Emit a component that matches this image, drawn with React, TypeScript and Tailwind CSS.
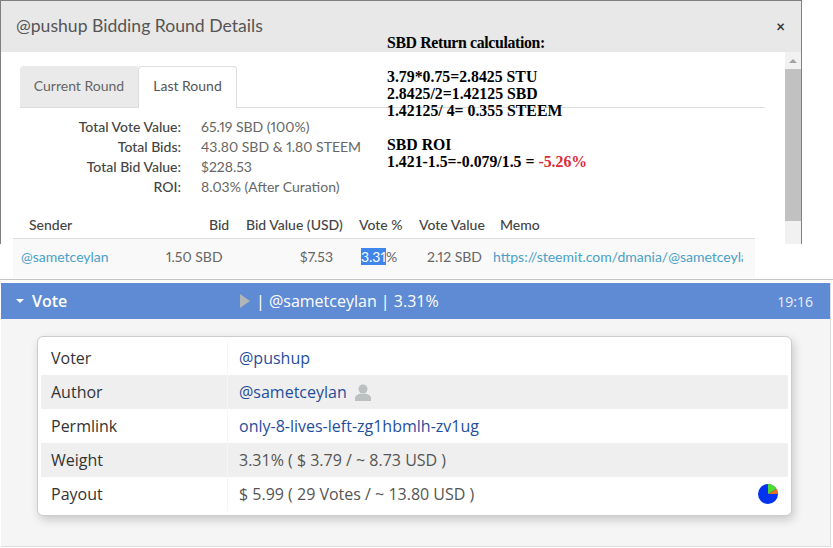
const stats = [
  { label: 'Total Vote Value:', value: '65.19 SBD (100%)' },
  { label: 'Total Bids:', value: '43.80 SBD & 1.80 STEEM' },
  { label: 'Total Bid Value:', value: '$228.53' },
  { label: 'ROI:', value: '8.03% (After Curation)' },
]

const UserIcon = () => (
  <svg width="18" height="17" viewBox="0 0 18 17" className="ml-[7px]">
    <circle cx="9" cy="5" r="4.5" fill="#bcc0c0" />
    <path d="M1 17v-3c0-2.5 3-3.8 5-4.300h6c2 .5 5 1.800 5 4.300v3z" fill="#bcc0c0" />
  </svg>
)

const PayoutPie = () => (
  <svg width="20" height="20" viewBox="0 0 20 20">
    <circle cx="10" cy="10" r="10" fill="#0433f0" />
    <path d="M10 10V0a10 10 0 0 1 8.500 4.700z" fill="#4ddc32" />
    <path d="M10 10l8.500-5.300A10 10 0 0 1 20 10z" fill="#dc7426" />
  </svg>
)

const Row = ({ label, alt, children }: { label: string; alt?: boolean; children: React.ReactNode }) => (
  <div className={`flex h-[34px] items-center ${alt ? 'bg-[#efefef]' : 'bg-white'}`}>
    <div className="w-[187px] shrink-0 border-r border-[#f6f6f6] pl-[10px] self-stretch flex items-center text-[#333]">{label}</div>
    <div className="flex flex-1 items-center pl-[11px] pr-[10px] text-[#555]">{children}</div>
  </div>
)

export default function App() {
  return (
    <div className="h-[548px] w-[833px] overflow-hidden bg-white font-['Open_Sans',sans-serif]">
      {/* bidding modal */}
      <div className="relative h-[280px] border-b border-[#c4c4c4] font-['Lato',sans-serif] proportional-nums">
        <div className="flex h-[244px] w-[802px] flex-col border-x border-t border-[#808080]">
          <div className="flex h-[51px] shrink-0 items-center justify-between bg-[#e8e8e8] pl-[15px] pr-[16px]">
            <span className="text-[17.6px] text-[#555]">@pushup Bidding Round Details</span>
            <span className="text-[15px] font-bold leading-none text-[#333]">×</span>
          </div>
          <div className="flex min-h-0 flex-1">
            <div className="flex-1 text-[14px] text-[#666]">
              <div className="ml-[19px] mr-[20px] mt-[14px] flex h-[42px] border-b border-[#ddd]">
                <div className="flex h-[41px] w-[118px] items-center justify-center rounded-tl-[4px] bg-[#eaeaea] pb-[2px] text-[#666]">Current Round</div>
                <div className="flex h-[42px] w-[99px] items-center justify-center rounded-t-[4px] border-x border-t border-[#ddd] bg-white pb-[4px] text-[#555]">Last Round</div>
              </div>
              <div className="mt-[8px]">
                {stats.map((s) => (
                  <div key={s.label} className="flex h-[20px] items-center">
                    <div className="w-[180px] text-right font-medium text-[#444]">{s.label}</div>
                    <div className="ml-[20px]">{s.value}</div>
                  </div>
                ))}
              </div>
              <div className="relative z-10 ml-[12px] mt-[16px] w-[742px]">
                <div className="flex h-[27px] items-center border-b border-[#ddd] pb-[2px] font-medium text-[#444]">
                  <div className="ml-[16px] w-[180px]">Sender</div>
                  <div className="w-[37px]">Bid</div>
                  <div className="w-[113px]">Bid Value (USD)</div>
                  <div className="w-[60px]">Vote %</div>
                  <div className="w-[81px]">Vote Value</div>
                  <div>Memo</div>
                </div>
                <div className="flex h-[39px] items-center whitespace-nowrap bg-[#f9f9f9] pb-[4px]">
                  <div className="ml-[8px] w-[145px] text-[#4aa0c8]">@sametceylan</div>
                  <div className="w-[54px]">1.50 SBD</div>
                  <div className="w-[113px] text-right">$7.53</div>
                  <div className="ml-[28px] w-[66px]"><span className="bg-[#3f86ec] text-white">3.31</span>%</div>
                  <div className="w-[66px]">2.12 SBD</div>
                  <div className="w-[250px] overflow-hidden text-[#4aa0c8]">https://steemit.com/dmania/@sametceylan/only-8-lives-left</div>
                </div>
              </div>
            </div>
            <div className="flex w-[16px] shrink-0 flex-col bg-[#f1f1f1]">
              <div className="flex h-[17px] items-center justify-center">
                <div className="h-0 w-0 border-x-[4px] border-b-[4px] border-x-transparent border-b-[#a3a3a3]"></div>
              </div>
              <div className="h-[152px] bg-[#c1c1c1]"></div>
            </div>
          </div>
        </div>

        {/* pasted calculation note */}
        <div className="absolute left-[387px] top-[34px] z-20 font-['Liberation_Serif',serif] text-[15.8px] font-bold leading-[17px] text-black">
          <div className="tracking-[-0.35px]">SBD Return calculation:</div>
          <div className="h-[17px]"></div>
          <div>3.79*0.75=2.8425 STU</div>
          <div>2.8425/2=1.42125 SBD</div>
          <div>1.42125/ 4= 0.355 STEEM</div>
          <div className="h-[17px]"></div>
          <div>SBD ROI</div>
          <div>1.421-1.5=-0.079/1.5 = <span className="text-[#dc2a3a]">-5.26%</span></div>
        </div>
      </div>

      {/* vote panel */}
      <div className="ml-[1px] mt-[3px] h-[264px] w-[830px] border-b border-r border-[#ddd] bg-[#f5f5f5]">
        <div className="flex h-[36px] items-center bg-[#5f8bd4] text-white">
          <div className="ml-[15px] h-0 w-0 border-x-[4px] border-t-[4px] border-x-transparent border-t-white"></div>
          <div className="ml-[8px] w-[208px] text-[16px] font-semibold">Vote</div>
          <div className="h-0 w-0 border-y-[7px] border-l-[10px] border-y-transparent border-l-[#b0b5b5]"></div>
          <div className="ml-[6px] text-[16px]">| @sametceylan | 3.31%</div>
          <div className="ml-auto mr-[17px] text-[14px] text-[#eef]">19:16</div>
        </div>
        <div className="ml-[36px] mt-[17px] w-[755px] rounded-[6px] border border-[#ccc] bg-white px-[3px] py-[4px] text-[16px] shadow-[2px_4px_10px_rgba(0,0,0,0.18)]">
          <Row label="Voter"><span className="text-[#1f4e9c]">@pushup</span></Row>
          <Row label="Author" alt><span className="text-[#1f4e9c]">@sametceylan</span><UserIcon /></Row>
          <Row label="Permlink"><span className="text-[#1f4e9c]">only-8-lives-left-zg1hbmlh-zv1ug</span></Row>
          <Row label="Weight" alt>3.31% ( $ 3.79 / ~ 8.73 USD )</Row>
          <Row label="Payout">
            <span>$ 5.99 ( 29 Votes / ~ 13.80 USD )</span>
            <span className="ml-auto"><PayoutPie /></span>
          </Row>
        </div>
      </div>
    </div>
  )
}
